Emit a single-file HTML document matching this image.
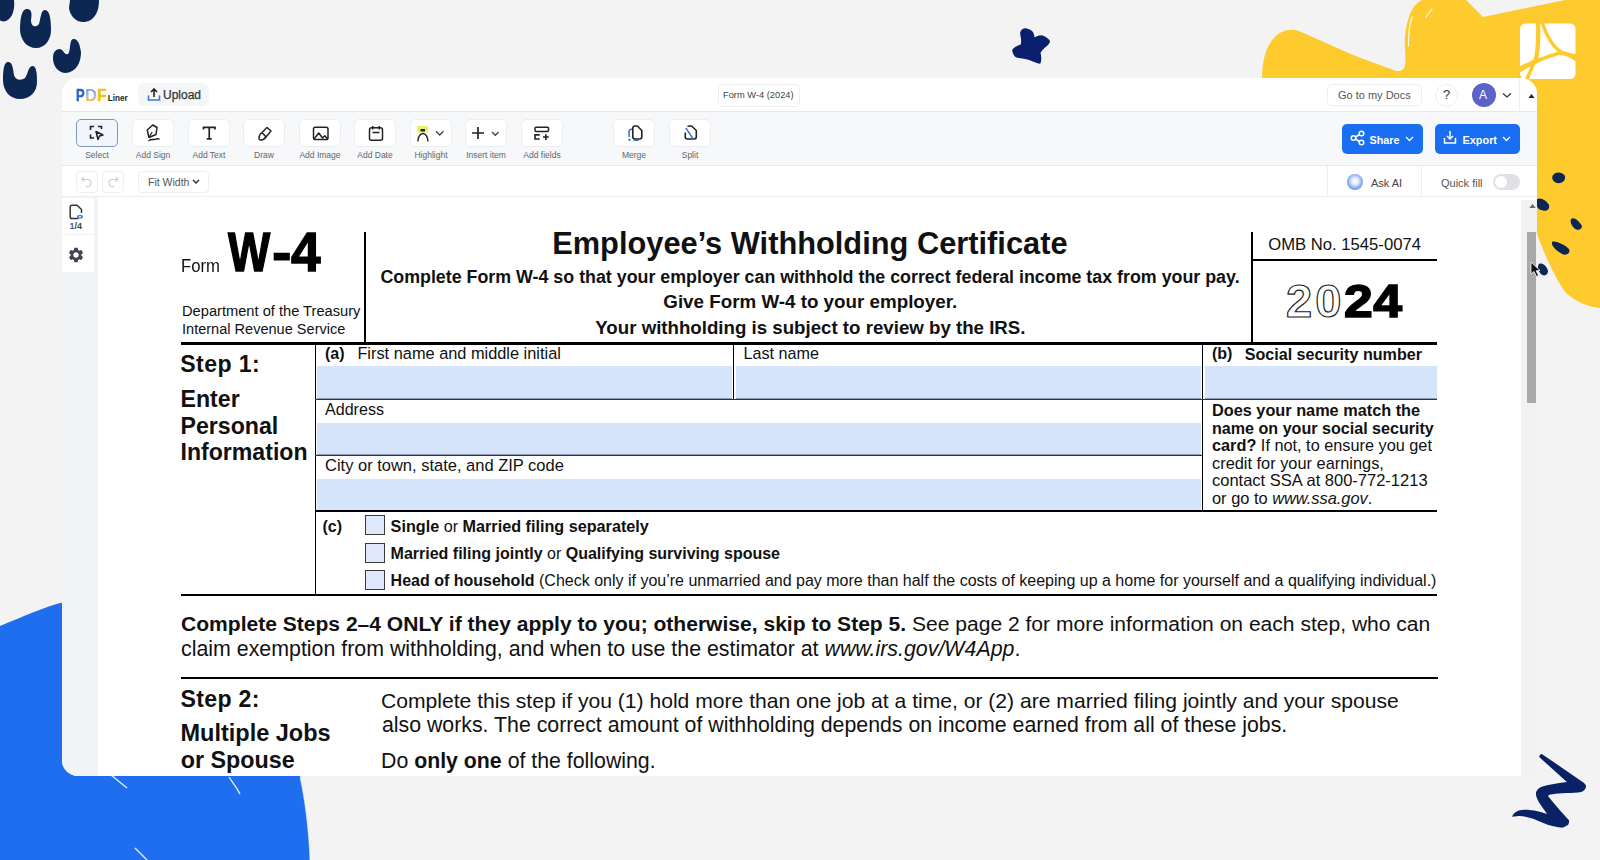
<!DOCTYPE html>
<html><head><meta charset="utf-8">
<style>
*{box-sizing:border-box}
html,body{margin:0;padding:0}
body{width:1600px;height:860px;background:#f3f3f4;position:relative;overflow:hidden;font-family:"Liberation Sans",sans-serif;color:#000}
.abs{position:absolute}
.t{position:absolute;white-space:pre;line-height:1}
#win{position:absolute;left:62px;top:78px;width:1475px;height:698px;background:#fff;border-radius:16px;overflow:hidden}
.hdr{position:absolute;left:0;top:0;width:1475px;height:34px;background:#fff;border-bottom:1px solid #e6e8ec}
.tb{position:absolute;left:0;top:34px;width:1475px;height:54px;background:#f7f8fa;border-bottom:1px solid #e6e8ec}
.r2{position:absolute;left:0;top:88px;width:1475px;height:31px;background:#fff;border-bottom:1px solid #eceef1}
.btn{position:absolute;top:7px;width:42px;height:28px;background:#fff;border:1px solid #eceef1;border-radius:5px}
.btn.sel{background:#f2f6fc;border-color:#7f97bd}
.lbl{position:absolute;top:38px;font-size:8.5px;color:#62666c;white-space:pre;text-align:center;width:60px;line-height:10px}
.btn svg{position:absolute;left:13px;top:6px}
.doc{position:absolute;left:36px;top:119px;width:1423px;height:579px;background:#fff}
.f{position:absolute;white-space:pre;line-height:1;color:#111}
.b{font-weight:bold}
.hl{position:absolute;background:#000}
.fld{position:absolute;background:#d5e4fa;border-bottom:1px solid #8e9cb3}
.cb{position:absolute;width:20px;height:20px;background:#dfe9fb;border:1.5px solid #3a3a3a}
</style></head>
<body>
<!-- decorations behind -->
<svg class="abs" style="left:0;top:0" width="1600" height="860" viewBox="0 0 1600 860">
  <!-- top-left navy blobs -->
  <g fill="#0c2752">
    <path d="M0 0 L14 0 C15 8 13 18 6 21 C3 22 0 21 0 20 Z"/>
    <path d="M26 9 C32 8 32 14 31 20 C31 27 36 28 39 24 C41 17 41 10 45 10 C50 10 51 20 51 30 C51 40 45 48 36 48 C27 48 20 40 20 29 C20 18 22 10 26 9 Z"/>
    <path d="M70 0 L99 0 C99 10 96 20 85 22 C76 23 70 16 69 8 Z"/>
    <path d="M73 39 C78 38 80 45 81 52 C81 63 76 72 66 73 C58 73 53 66 53 58 C53 52 56 49 60 49 C64 50 64 55 68 54 C71 51 69 40 73 39 Z"/>
    <path d="M8 62 C13 62 13 70 14 75 C15 80 21 81 25 78 C28 74 28 66 33 66 C37 67 37 76 37 82 C37 92 30 99 20 99 C10 99 3 91 3 80 C3 70 4 62 8 62 Z"/>
  </g>
  <!-- navy star -->
  <path fill="#0a1f6e" d="M1020.2 32.4 C1021 30 1022.5 28.5 1024.5 28.2 C1027 28 1030.5 29.5 1032.8 31.7 C1034 33.5 1034.2 35.5 1034.5 37.3 C1037 36 1039.5 35.3 1041.9 35.2 C1044.5 36 1046.5 37.5 1048.1 38.7 C1049.5 39.8 1050.2 41 1049.9 42.2 C1048.5 44.5 1046.5 46.5 1044.7 47.8 C1043 49.5 1041.5 51 1040.5 52.7 C1041 55 1041.5 57.5 1041.2 59.7 C1041 61.5 1040.8 63 1040.1 63.8 C1038 63.5 1035.5 62.5 1033.5 61.8 C1031 60.8 1028.5 59.8 1026.5 59.3 C1024.5 59 1022.5 58.7 1020.9 58.3 C1019 58 1017 57.7 1015.4 56.9 C1013.5 55 1012.2 52 1012.2 49.9 C1013 48.3 1014.5 47.2 1016 46.4 C1018 45.5 1019.8 45 1020.9 44.3 C1021.2 42 1021.2 40 1020.9 38 C1020.5 36 1020 34 1020.2 32.4 Z"/>
  <!-- yellow blob -->
  <path fill="#fdcb2d" d="M1262 80 C1262 62 1265 45 1278 34 C1285 29.5 1293 28.5 1300 31.5 C1320 40 1345 52 1362 58.5 C1375 63 1388 68 1396 70.9 C1400 71.5 1403 70.5 1404.5 67 C1406 62 1405.5 55 1404.7 45 C1404.5 35 1406 25 1409 17 C1412 8 1416 3 1422 0 L1466 0 L1483 17 L1565 0 L1600 0 L1600 308 C1590 307 1578 303 1566 293 C1556 280 1545 256 1537 234 L1520 200 L1262 200 Z"/>
  <path d="M1426 17 L1432 9 M1408.5 46 C1408.5 35 1409 25 1412 17" stroke="#fff" stroke-width="1.2" fill="none" opacity="0.9" stroke-linecap="round"/>
  <!-- white acrobat icon -->
  <g>
    <rect x="1520" y="23.5" width="55.5" height="55.5" rx="5.5" fill="#fff"/>
    <g stroke="#fdcb2d" fill="none" stroke-linecap="butt">
      <path d="M1538 22 C1538.5 40 1538.5 54 1535 61 C1531 64 1525 66 1519 69" stroke-width="4.5"/>
      <path d="M1542 22 C1547 37 1553 47 1561 52 C1566 54 1571 55 1577 56" stroke-width="3.5"/>
      <path d="M1519 71 C1530 64 1545 57 1558 53.5 C1566 53 1571 56 1577 60" stroke-width="3.5"/>
      <path d="M1537 57 C1533 65 1530 72 1526 81" stroke-width="3.5"/>
    </g>
    <path d="M1540.8 36 L1540.2 55.5 L1555 52.5 Z" fill="#fdcb2d" opacity="0"/>
  </g>
  <!-- navy dots on yellow -->
  <g fill="#0c2752">
    <path d="M1553 175 C1556 171 1563 172 1565 176 C1566 181 1561 184 1557 183 C1553 182 1551 178 1553 175 Z"/>
    <path d="M1537 199 C1541 197 1547 201 1549 205 C1550 210 1546 212 1541 210 C1537 209 1535 203 1537 199 Z"/>
    <path d="M1571 219 C1574 216 1580 222 1582 226 C1582 230 1577 231 1574 228 C1571 225 1570 221 1571 219 Z"/>
    <path d="M1552 242 C1555 240 1565 245 1569 249 C1571 253 1566 256 1562 254 C1557 251 1551 246 1552 242 Z"/>
    <path d="M1539 264 C1543 262 1547 267 1548 271 C1548 275 1544 277 1541 274 C1538 271 1537 266 1539 264 Z"/>
  </g>
  <!-- blue blob bottom-left -->
  <path fill="#1f6ef0" d="M0 626 C22 617 44 607 64 602 L290 700 C298 740 300 760 300 776 C305 800 309 830 310 860 L0 860 Z"/>
  <path d="M111 775 L127 788 M229 777 C233 783 237 788 240 794 M135 848 L147 860" stroke="#fff" stroke-width="1.3" opacity="0.9"/><path d="M300 777 C305 800 309 830 310 860" stroke="#fff" stroke-width="0.8" fill="none" opacity="0.7"/>
  <!-- squiggle -->
  <path fill="#0b2166" d="M1539.2 757 C1539.5 755 1540.5 754 1541.8 753.9 L1583.7 782.7 C1586 784.5 1586.5 786.5 1585.8 787.5 C1584.5 790.5 1583 792 1578 792.5 C1568 793 1556 793.5 1550 794.5 C1548.5 795 1548 796 1548.1 796.3 C1552 801 1562 813 1569 820.3 C1569.5 823 1568 825.5 1566.9 825.5 C1564 827.5 1562 827.8 1560.7 827.6 C1556 827 1550 825.5 1547.1 824.5 C1540 821.5 1535 819.5 1531.4 818.2 C1526 816.5 1522 816 1518.8 816.1 C1515 816.3 1513 817 1512 816.7 C1513 814 1515 812 1517.8 810.9 C1521 810 1525 809.7 1529.3 809.9 C1536 810.5 1542 812 1547.1 814 C1543 808 1538 802 1536.6 797.3 C1535.8 795 1535.8 793.5 1536.1 792.1 C1537.5 789 1539.5 787.5 1541.8 786.8 C1545 785.5 1549 784.8 1552.3 784.2 C1557 783.3 1562 782.6 1566.9 782.1 Z"/>
</svg>

<div id="win">
  <!-- header -->
  <div class="hdr">
    <div class="t b" style="left:13.6px;top:9.3px;font-size:17px;color:#2b63c8;transform:scaleX(0.76);transform-origin:0 0;-webkit-text-stroke:0.5px #2b63c8">P</div>
    <div class="t b" style="left:22.6px;top:9.3px;font-size:17px;transform:scaleX(0.98);transform-origin:0 0;background:linear-gradient(180deg,#6d91d6 0%,#a8bde3 55%,#f0b64a 78%,#f7d27a 100%);-webkit-background-clip:text;background-clip:text;color:transparent">D</div>
    <div class="t b" style="left:34.6px;top:9.3px;font-size:17px;color:#f1c21f;transform:scaleX(0.92);transform-origin:0 0;-webkit-text-stroke:0.5px #f1c21f">F</div>
    <div class="t b" style="left:45.7px;top:17.2px;font-size:8.2px;color:#222">Liner</div>
    <div class="abs" style="left:76px;top:5px;width:71px;height:23px;background:#f5f6f8;border-radius:6px"></div>
    <svg class="abs" style="left:85px;top:10px" width="14" height="14" viewBox="0 0 14 14"><path d="M7 1 L7 9 M4 4 L7 1 L10 4" stroke="#222" stroke-width="1.6" fill="none"/><path d="M1.5 8 L1.5 12 L12.5 12 L12.5 8" stroke="#3c78d8" stroke-width="1.6" fill="none" stroke-linecap="round"/></svg>
    <div class="t" style="left:101px;top:11px;font-size:12px;color:#333;-webkit-text-stroke:0.25px #333">Upload</div>
    <div class="abs" style="left:655.5px;top:5.5px;width:82px;height:23px;border:1px solid #eceef1;border-radius:5px"></div>
    <div class="t" style="left:661px;top:13px;font-size:9.3px;color:#444">Form W-4 (2024)</div>
    <div class="abs" style="left:1265px;top:6px;width:95px;height:22px;border:1px solid #eceef1;border-radius:5px"></div>
    <div class="t" style="left:1276px;top:12px;font-size:11px;color:#555">Go to my Docs</div>
    <div class="abs" style="left:1373px;top:6px;width:23px;height:23px;border:1px solid #eceef1;border-radius:50%"></div>
    <div class="t" style="left:1381px;top:10px;font-size:13px;color:#333">?</div>
    <div class="abs" style="left:1410px;top:5px;width:24px;height:24px;background:#5b63c6;border-radius:50%"></div>
    <div class="t" style="left:1417px;top:11px;font-size:12px;color:#fff">A</div>
    <svg class="abs" style="left:1440px;top:14px" width="10" height="7" viewBox="0 0 10 7"><path d="M1 1.5 L5 5 L9 1.5" stroke="#333" stroke-width="1.3" fill="none"/></svg>
    <div class="abs" style="left:1457px;top:0;width:1px;height:34px;background:#eceef1"></div>
    <svg class="abs" style="left:1466px;top:15.5px" width="7" height="4.5" viewBox="0 0 7 4.5"><path d="M0 4.5 L3.5 0 L7 4.5 Z" fill="#222"/></svg>
  </div>

  <!-- toolbar -->
  <div class="tb" id="tb">
    <div class="btn sel" style="left:14px"><svg width="16" height="16" viewBox="0 0 16 16" style="left:12px;top:5px"><path d="M1.5 5 V1.5 H5 M9 1.5 H12.5 V4 M1.5 9.5 V13 H5" stroke="#222" stroke-width="1.6" fill="none"/><path d="M7 6.5 L14 10 L10.5 11 L9 14.5 Z" stroke="#222" stroke-width="1.5" fill="none" stroke-linejoin="round"/></svg></div>
    <div class="lbl" style="left:5px">Select</div>
    <div class="btn" style="left:70px"><svg width="16" height="18" viewBox="0 0 16 18" style="left:13px;top:4px"><path d="M6.8 1 L11 3.5 L10 10.5 L3 13.5 L1.2 6 Z" stroke="#222" stroke-width="1.5" fill="none" stroke-linejoin="round"/><path d="M3.2 13 L6.2 8" stroke="#222" stroke-width="1.3"/><path d="M3 16.5 C5 14.8 7 16 9 15.3 C10.5 14.7 11.5 14.5 13 15" stroke="#222" stroke-width="1.4" fill="none" stroke-linecap="round"/></svg></div>
    <div class="lbl" style="left:61px">Add Sign</div>
    <div class="btn" style="left:126px"><svg width="16" height="16" viewBox="0 0 16 16" style="left:13px;top:6px"><path d="M1.5 3.5 V1.3 H13 V3.5 M7.25 1.3 V12.8 M4.8 12.8 H9.7" stroke="#222" stroke-width="1.7" fill="none"/></svg></div>
    <div class="lbl" style="left:117px">Add Text</div>
    <div class="btn" style="left:181px"><svg width="16" height="16" viewBox="0 0 16 16" style="left:13px;top:6px"><path d="M10 1.5 L14 5 L9 11 C8 12.5 5 14 3 14 C2 14 2 13 2 12 C2 10 3.5 7.5 5 6.5 Z M5 6.5 L9 11" stroke="#222" stroke-width="1.5" fill="none" stroke-linejoin="round"/></svg></div>
    <div class="lbl" style="left:172px">Draw</div>
    <div class="btn" style="left:237px"><svg width="18" height="16" viewBox="0 0 18 16" style="left:12px;top:6px"><rect x="1.5" y="1.2" width="14.5" height="12.3" rx="1.8" stroke="#222" stroke-width="1.5" fill="none"/><path d="M2 13 L6.8 7 L10.5 12 L12.8 9.8 L15.8 13" stroke="#222" stroke-width="1.5" fill="none" stroke-linejoin="round"/></svg></div>
    <div class="lbl" style="left:228px">Add Image</div>
    <div class="btn" style="left:292px"><svg width="16" height="17" viewBox="0 0 16 17" style="left:12.5px;top:5px"><rect x="1.5" y="2.8" width="13" height="12.5" rx="2" stroke="#222" stroke-width="1.5" fill="none"/><path d="M4.5 7.5 H11.5 M4.8 1 V4.5 M11.2 1 V4.5" stroke="#222" stroke-width="1.5"/></svg></div>
    <div class="lbl" style="left:283px">Add Date</div>
    <div class="btn" style="left:348px"><svg width="30" height="18" viewBox="0 0 30 18" style="left:6px;top:5px"><rect x="0" y="1" width="11" height="6.5" fill="#e9f25c"/><path d="M3.5 4 H8 V6.5 H3.5 Z" fill="#222"/><path d="M0.9 16.5 C0.9 12 3 8.6 5.9 8.6 C8.8 8.6 10.9 12 10.9 16.5" stroke="#222" stroke-width="1.5" fill="none"/><path d="M19 6.3 L22.7 10 L26.4 6.3" stroke="#444" stroke-width="1.3" fill="none"/></svg></div>
    <div class="lbl" style="left:339px">Highlight</div>
    <div class="btn" style="left:403px"><svg width="30" height="17" viewBox="0 0 30 17" style="left:6px;top:5px"><path d="M6 2 V14 M0 8 H12" stroke="#222" stroke-width="1.7"/><path d="M20 7 L23.3 10.3 L26.6 7" stroke="#444" stroke-width="1.3" fill="none"/></svg></div>
    <div class="lbl" style="left:394px">Insert item</div>
    <div class="btn" style="left:459px"><svg width="17" height="16" viewBox="0 0 17 16" style="left:12px;top:6px"><rect x="1" y="1.2" width="13.5" height="4.3" rx="1" stroke="#222" stroke-width="1.5" fill="none"/><path d="M5.7 8.9 H1 V13 H5.7" stroke="#222" stroke-width="1.6" fill="none"/><path d="M11.9 8.2 V14 M9 11 H14.8" stroke="#222" stroke-width="1.6"/></svg></div>
    <div class="lbl" style="left:450px">Add fields</div>
    <div class="btn" style="left:551px"><svg width="16" height="16" viewBox="0 0 16 16" style="left:13px;top:5px"><path d="M5.8 3.2 C5.8 1.9 6.7 1 8 1 H10.3 L14.8 5.5 V11.8 C14.8 13.1 13.9 14 12.6 14 H8 C6.7 14 5.8 13.1 5.8 11.8 Z" stroke="#222" stroke-width="1.6" fill="none" stroke-linejoin="round"/><path d="M5 4 C3.2 4.2 2 5.2 2 7 V12" stroke="#3c6fc9" stroke-width="1.5" fill="none"/><path d="M2.5 13.8 L2.5 16 M1.3 14.9 H3.7" stroke="#3c6fc9" stroke-width="1.3"/><path d="M6.5 15.8 H10 C10.8 15.8 11.2 15.3 11.2 14.5" stroke="#3c6fc9" stroke-width="1.5" fill="none"/></svg></div>
    <div class="lbl" style="left:542px">Merge</div>
    <div class="btn" style="left:607px"><svg width="16" height="17" viewBox="0 0 16 17" style="left:13px;top:5px"><path d="M4.5 1.5 C5 1.1 5.6 1 6.3 1 H8.6 L13.3 5.5 V11.8 C13.3 13.1 12.4 14 11.1 14 H4.2 C2.9 14 2.3 13.3 2.3 12 V7.5" stroke="#222" stroke-width="1.6" fill="none" stroke-linejoin="round"/><path d="M2.8 2.8 L10.8 14.8" stroke="#3c6fc9" stroke-width="1.5"/></svg></div>
    <div class="lbl" style="left:598px">Split</div>
    <div class="abs" style="left:1279.5px;top:11.5px;width:81px;height:30.5px;background:#1a6ef2;border-radius:5px"></div>
    <svg class="abs" style="left:1288px;top:18px" width="15" height="16" viewBox="0 0 15 16"><circle cx="3.5" cy="8" r="2.3" stroke="#fff" stroke-width="1.5" fill="none"/><circle cx="11.5" cy="3.5" r="2.3" stroke="#fff" stroke-width="1.5" fill="none"/><circle cx="11.5" cy="12.5" r="2.3" stroke="#fff" stroke-width="1.5" fill="none"/><path d="M5.5 7 L9.5 4.5 M5.5 9 L9.5 11.5" stroke="#fff" stroke-width="1.5"/></svg>
    <div class="t b" style="left:1307.5px;top:22.6px;font-size:10.8px;color:#fff">Share</div>
    <svg class="abs" style="left:1343px;top:24px" width="9" height="6" viewBox="0 0 9 6"><path d="M1 1 L4.5 4.5 L8 1" stroke="#fff" stroke-width="1.3" fill="none"/></svg>
    <div class="abs" style="left:1373px;top:11.5px;width:84.5px;height:30.5px;background:#1a6ef2;border-radius:5px"></div>
    <svg class="abs" style="left:1381px;top:18px" width="14" height="15" viewBox="0 0 14 15"><path d="M7 1 V9 M4 6 L7 9 L10 6" stroke="#fff" stroke-width="1.5" fill="none"/><path d="M1.5 8 V13 H12.5 V8" stroke="#fff" stroke-width="1.5" fill="none"/></svg>
    <div class="t b" style="left:1400.5px;top:22.6px;font-size:10.9px;color:#fff">Export</div>
    <svg class="abs" style="left:1440px;top:24px" width="9" height="6" viewBox="0 0 9 6"><path d="M1 1 L4.5 4.5 L8 1" stroke="#fff" stroke-width="1.3" fill="none"/></svg>
  </div>
  <!-- row 2 -->
  <div class="r2" id="r2">
    <div class="abs" style="left:14px;top:5px;width:22px;height:22px;border:1px solid #eceef1;border-radius:4px"></div>
    <svg class="abs" style="left:19px;top:10px" width="12" height="12" viewBox="0 0 12 12"><path d="M3 1 L1 3.5 L3.5 5.5 M1.2 3.5 H6.5 C8.5 3.5 10 5 10 7 C10 9 8.5 10.5 6.5 10.5 H5" stroke="#c8cbd0" stroke-width="1.2" fill="none"/></svg>
    <div class="abs" style="left:40px;top:5px;width:22px;height:22px;border:1px solid #eceef1;border-radius:4px"></div>
    <svg class="abs" style="left:45px;top:10px" width="12" height="12" viewBox="0 0 12 12"><path d="M9 1 L11 3.5 L8.5 5.5 M10.8 3.5 H5.5 C3.5 3.5 2 5 2 7 C2 9 3.5 10.5 5.5 10.5 H7" stroke="#c8cbd0" stroke-width="1.2" fill="none"/></svg>
    <div class="abs" style="left:76px;top:5px;width:71px;height:22px;border:1px solid #eceef1;border-radius:4px"></div>
    <div class="t" style="left:86px;top:11px;font-size:10.5px;color:#555">Fit Width</div>
    <svg class="abs" style="left:130px;top:13px" width="8" height="6" viewBox="0 0 8 6"><path d="M1 1 L4 4 L7 1" stroke="#333" stroke-width="1.5" fill="none"/></svg>
    <div class="abs" style="left:1265px;top:0;width:1px;height:31px;background:#eceef1"></div>
    <div class="abs" style="left:1285px;top:8px;width:16px;height:16px;border-radius:50%;background:radial-gradient(circle at 50% 45%,#ffffff 0,#dfe8fb 30%,#7aa0ea 65%,#5a86de 100%)"></div>
    <div class="t" style="left:1309px;top:12px;font-size:11px;color:#444">Ask AI</div>
    <div class="abs" style="left:1359px;top:0;width:1px;height:31px;background:#eceef1"></div>
    <div class="t" style="left:1379px;top:12px;font-size:11px;color:#555">Quick fill</div>
    <div class="abs" style="left:1431px;top:8px;width:27px;height:16px;border-radius:8px;background:#dfe1e5"></div>
    <div class="abs" style="left:1433px;top:10px;width:12px;height:12px;border-radius:50%;background:#fff"></div>
  </div>

  <!-- sidebar -->
  <div class="abs" style="left:0;top:119px;width:36px;height:579px;background:#f3f4f6"></div>
  <div class="abs" style="left:0;top:120px;width:32px;height:74px;background:#fff"></div>
  <div class="abs" style="left:0;top:156px;width:32px;height:1px;background:#eef0f2"></div>
  <svg class="abs" style="left:7px;top:126px" width="15" height="17" viewBox="0 0 15 17"><path d="M9.5 14.5 H3 C2 14.5 1.2 13.7 1.2 12.7 V3 C1.2 2 2 1.2 3 1.2 H8 L12.5 5.5 V9" stroke="#333" stroke-width="1.5" fill="none" stroke-linejoin="round"/><ellipse cx="11" cy="12.8" rx="3" ry="2" fill="#4a86e0"/><circle cx="11" cy="12.8" r="0.9" fill="#fff"/></svg>
  <div class="t b" style="left:7.5px;top:143.5px;font-size:9px;color:#444"><span style="color:#4a5a92">1</span>/4</div>
  <svg class="abs" style="left:5px;top:168px" width="18" height="18" viewBox="0 0 24 24"><path fill="#3d4452" d="M19.14 12.94c.04-.3.06-.61.06-.94 0-.32-.02-.64-.07-.94l2.03-1.58a.49.49 0 0 0 .12-.61l-1.92-3.32a.49.49 0 0 0-.59-.22l-2.39.96c-.5-.38-1.03-.7-1.62-.94l-.36-2.54a.48.48 0 0 0-.48-.41h-3.84c-.24 0-.43.17-.47.41l-.36 2.54c-.59.24-1.13.57-1.62.94l-2.39-.96a.48.48 0 0 0-.59.22L2.74 8.87c-.12.21-.08.47.12.61l2.03 1.58c-.05.3-.07.62-.07.94s.02.64.07.94l-2.03 1.58a.49.49 0 0 0-.12.61l1.92 3.32c.12.22.37.29.59.22l2.39-.96c.5.38 1.03.7 1.62.94l.36 2.54c.05.24.24.41.48.41h3.84c.24 0 .44-.17.47-.41l.36-2.54c.59-.24 1.13-.56 1.62-.94l2.39.96c.22.08.47 0 .59-.22l1.92-3.32c.12-.22.07-.47-.12-.61l-2.01-1.58zM12 15.6c-1.98 0-3.6-1.62-3.6-3.6s1.62-3.6 3.6-3.6 3.6 1.62 3.6 3.6-1.62 3.6-3.6 3.6z"/></svg>

  <!-- document -->
  <div class="doc" id="doc"></div>
<!--FORM-->
<div id="form" style="position:absolute;left:-62px;top:-78px;width:1600px;height:860px">
<div class="f" style="left:181.4px;top:257.7px;font-size:17.6px;transform:scaleX(0.95);transform-origin:0 0;">Form</div>
<div class="f" style="left:228px;top:224.3px;font-size:55.9px;font-weight:bold;transform:scaleX(0.80);transform-origin:0 0;-webkit-text-stroke:1.4px #000;color:#000">W</div>
<div class="f" style="left:272px;top:224.3px;font-size:55.9px;font-weight:bold;transform:scaleX(1.05);transform-origin:0 0;-webkit-text-stroke:1.2px #000;color:#000">-</div>
<div class="f" style="left:291px;top:224.3px;font-size:55.9px;font-weight:bold;transform:scaleX(0.95);transform-origin:0 0;-webkit-text-stroke:1.4px #000;color:#000">4</div>
<div class="f" style="left:182.0px;top:303.9px;font-size:14.66px;">Department of the Treasury</div>
<div class="f" style="left:182.0px;top:322.1px;font-size:14.55px;">Internal Revenue Service</div>
<div class="f" style="left:552.2px;top:229.4px;font-size:30.8px;font-weight:bold;">Employee’s Withholding Certificate</div>
<div class="f" style="left:380.4px;top:268.5px;font-size:17.84px;font-weight:bold;">Complete Form W-4 so that your employer can withhold the correct federal income tax from your pay.</div>
<div class="f" style="left:663.3px;top:293.4px;font-size:18.8px;font-weight:bold;">Give Form W-4 to your employer.</div>
<div class="f" style="left:595.3px;top:319.1px;font-size:18.68px;font-weight:bold;">Your withholding is subject to review by the IRS.</div>
<div class="f" style="left:1268.3px;top:236.9px;font-size:16.65px;">OMB No. 1545-0074</div>
<div class="f" style="left:1286px;top:276.8px;font-size:47px;font-weight:bold;letter-spacing:3px;color:#fff;-webkit-text-stroke:1.2px #222">20</div>
<div class="f" style="left:1343.5px;top:276.8px;font-size:47px;font-weight:bold;letter-spacing:0.5px;color:#000;-webkit-text-stroke:1.6px #000;transform:scaleX(1.1);transform-origin:0 0">24</div>
<div class="hl" style="left:364px;top:232px;width:2px;height:111px;"></div>
<div class="hl" style="left:1251px;top:232px;width:2px;height:111px;"></div>
<div class="hl" style="left:1252px;top:259px;width:185px;height:1.5px;"></div>
<div class="hl" style="left:181px;top:342px;width:1256px;height:2.5px;"></div>
<div class="f" style="left:180.3px;top:353.0px;font-size:23.1px;font-weight:bold;letter-spacing:0.4px;">Step 1:</div>
<div class="f" style="left:180.5px;top:387.7px;font-size:23.15px;font-weight:bold;">Enter</div>
<div class="f" style="left:180.5px;top:414.7px;font-size:23.15px;font-weight:bold;">Personal</div>
<div class="f" style="left:180.5px;top:440.5px;font-size:23.1px;font-weight:bold;">Information</div>
<div class="hl" style="left:314.6px;top:344px;width:1.4px;height:251px;"></div>
<div class="fld" style="left:317px;top:366px;width:415px;height:33px;"></div>
<div class="fld" style="left:736px;top:366px;width:465px;height:33px;"></div>
<div class="fld" style="left:1205px;top:366px;width:232px;height:33px;"></div>
<div class="fld" style="left:317px;top:422.5px;width:884px;height:32.5px;"></div>
<div class="fld" style="left:317px;top:478.5px;width:884px;height:32.5px;"></div>
<div class="hl" style="left:733.2px;top:344px;width:1.3px;height:56px;"></div>
<div class="hl" style="left:1201.7px;top:344px;width:1.3px;height:167px;"></div>
<div class="hl" style="left:315px;top:398.5px;width:1122px;height:1.2px;background:#333"></div>
<div class="hl" style="left:315px;top:454.5px;width:887px;height:1.2px;background:#333"></div>
<div class="hl" style="left:315px;top:510px;width:1122px;height:1.8px;"></div>
<div class="f" style="left:325.0px;top:345.7px;font-size:16px;"><b>(a)</b></div>
<div class="f" style="left:357.4px;top:345.4px;font-size:16.35px;">First name and middle initial</div>
<div class="f" style="left:743.5px;top:345.4px;font-size:16.17px;">Last name</div>
<div class="f" style="left:1212.0px;top:345.6px;font-size:16px;"><b>(b)</b></div>
<div class="f" style="left:1244.7px;top:345.5px;font-size:16.11px;font-weight:bold;">Social security number</div>
<div class="f" style="left:325.0px;top:401.4px;font-size:16.08px;">Address</div>
<div class="f" style="left:325.0px;top:457.0px;font-size:16.49px;">City or town, state, and ZIP code</div>
<div class="f" style="left:1212.0px;top:402.3px;font-size:16.3px;"><b>Does your name match the</b></div>
<div class="f" style="left:1212.0px;top:420.2px;font-size:16.1px;"><b>name on your social security</b></div>
<div class="f" style="left:1212.0px;top:437.4px;font-size:16.3px;"><b>card?</b> If not, to ensure you get</div>
<div class="f" style="left:1212.0px;top:454.7px;font-size:16.37px;">credit for your earnings,</div>
<div class="f" style="left:1212.0px;top:472.0px;font-size:16.5px;">contact SSA at 800-772-1213</div>
<div class="f" style="left:1212.0px;top:489.5px;font-size:16.4px;">or go to <i>www.ssa.gov</i>.</div>
<div class="f" style="left:322.5px;top:519.0px;font-size:16px;"><b>(c)</b></div>
<div class="cb" style="left:365px;top:515px;width:20px;height:20px;"></div>
<div class="cb" style="left:365px;top:543px;width:20px;height:20px;"></div>
<div class="cb" style="left:365px;top:570px;width:20px;height:20px;"></div>
<div class="f" style="left:390.6px;top:517.9px;font-size:16.2px;"><b>Single</b> or <b>Married filing separately</b></div>
<div class="f" style="left:390.6px;top:546.2px;font-size:16.0px;"><b>Married filing jointly</b> or <b>Qualifying surviving spouse</b></div>
<div class="f" style="left:390.6px;top:572.8px;font-size:16.0px;"><b>Head of household</b> (Check only if you’re unmarried and pay more than half the costs of keeping up a home for yourself and a qualifying individual.)</div>
<div class="hl" style="left:181px;top:594px;width:1256px;height:2px;"></div>
<div class="f" style="left:181.0px;top:612.7px;font-size:21.06px;"><b>Complete Steps 2–4 ONLY if they apply to you; otherwise, skip to Step 5.</b> See page 2 for more information on each step, who can</div>
<div class="f" style="left:181.0px;top:639.4px;font-size:21.36px;">claim exemption from withholding, and when to use the estimator at <i>www.irs.gov/W4App</i>.</div>
<div class="hl" style="left:181px;top:677px;width:1257px;height:2px;"></div>
<div class="f" style="left:180.6px;top:687.9px;font-size:23.1px;font-weight:bold;letter-spacing:0.3px;">Step 2:</div>
<div class="f" style="left:180.5px;top:722.1px;font-size:23.5px;font-weight:bold;">Multiple Jobs</div>
<div class="f" style="left:180.8px;top:748.8px;font-size:23.3px;font-weight:bold;">or Spouse</div>
<div class="f" style="left:381.0px;top:690.1px;font-size:21.1px;">Complete this step if you (1) hold more than one job at a time, or (2) are married filing jointly and your spouse</div>
<div class="f" style="left:382.0px;top:714.5px;font-size:21.3px;">also works. The correct amount of withholding depends on income earned from all of these jobs.</div>
<div class="f" style="left:381.0px;top:750.5px;font-size:21.3px;">Do <b>only one</b> of the following.</div>
</div>
<!--/FORM-->

  <!-- scrollbar -->
  <div class="abs" style="left:1459px;top:122px;width:16px;height:576px;background:#f1f1f1"></div>
  <svg class="abs" style="left:1466.5px;top:125.5px" width="7" height="4.5" viewBox="0 0 7 4.5"><path d="M0 4.5 L3.5 0 L7 4.5 Z" fill="#666"/></svg>
  <div class="abs" style="left:1465px;top:154px;width:9px;height:171px;background:#a8a8a8"></div>
</div>
<svg class="abs" style="left:1530px;top:261px" width="12" height="17" viewBox="0 0 12 17"><path d="M1 1 L1 13 L4 10.5 L6.5 15.5 L8.5 14.5 L6.2 9.8 L10 9.5 Z" fill="#111" stroke="#fff" stroke-width="0.8"/></svg>
</body></html>
